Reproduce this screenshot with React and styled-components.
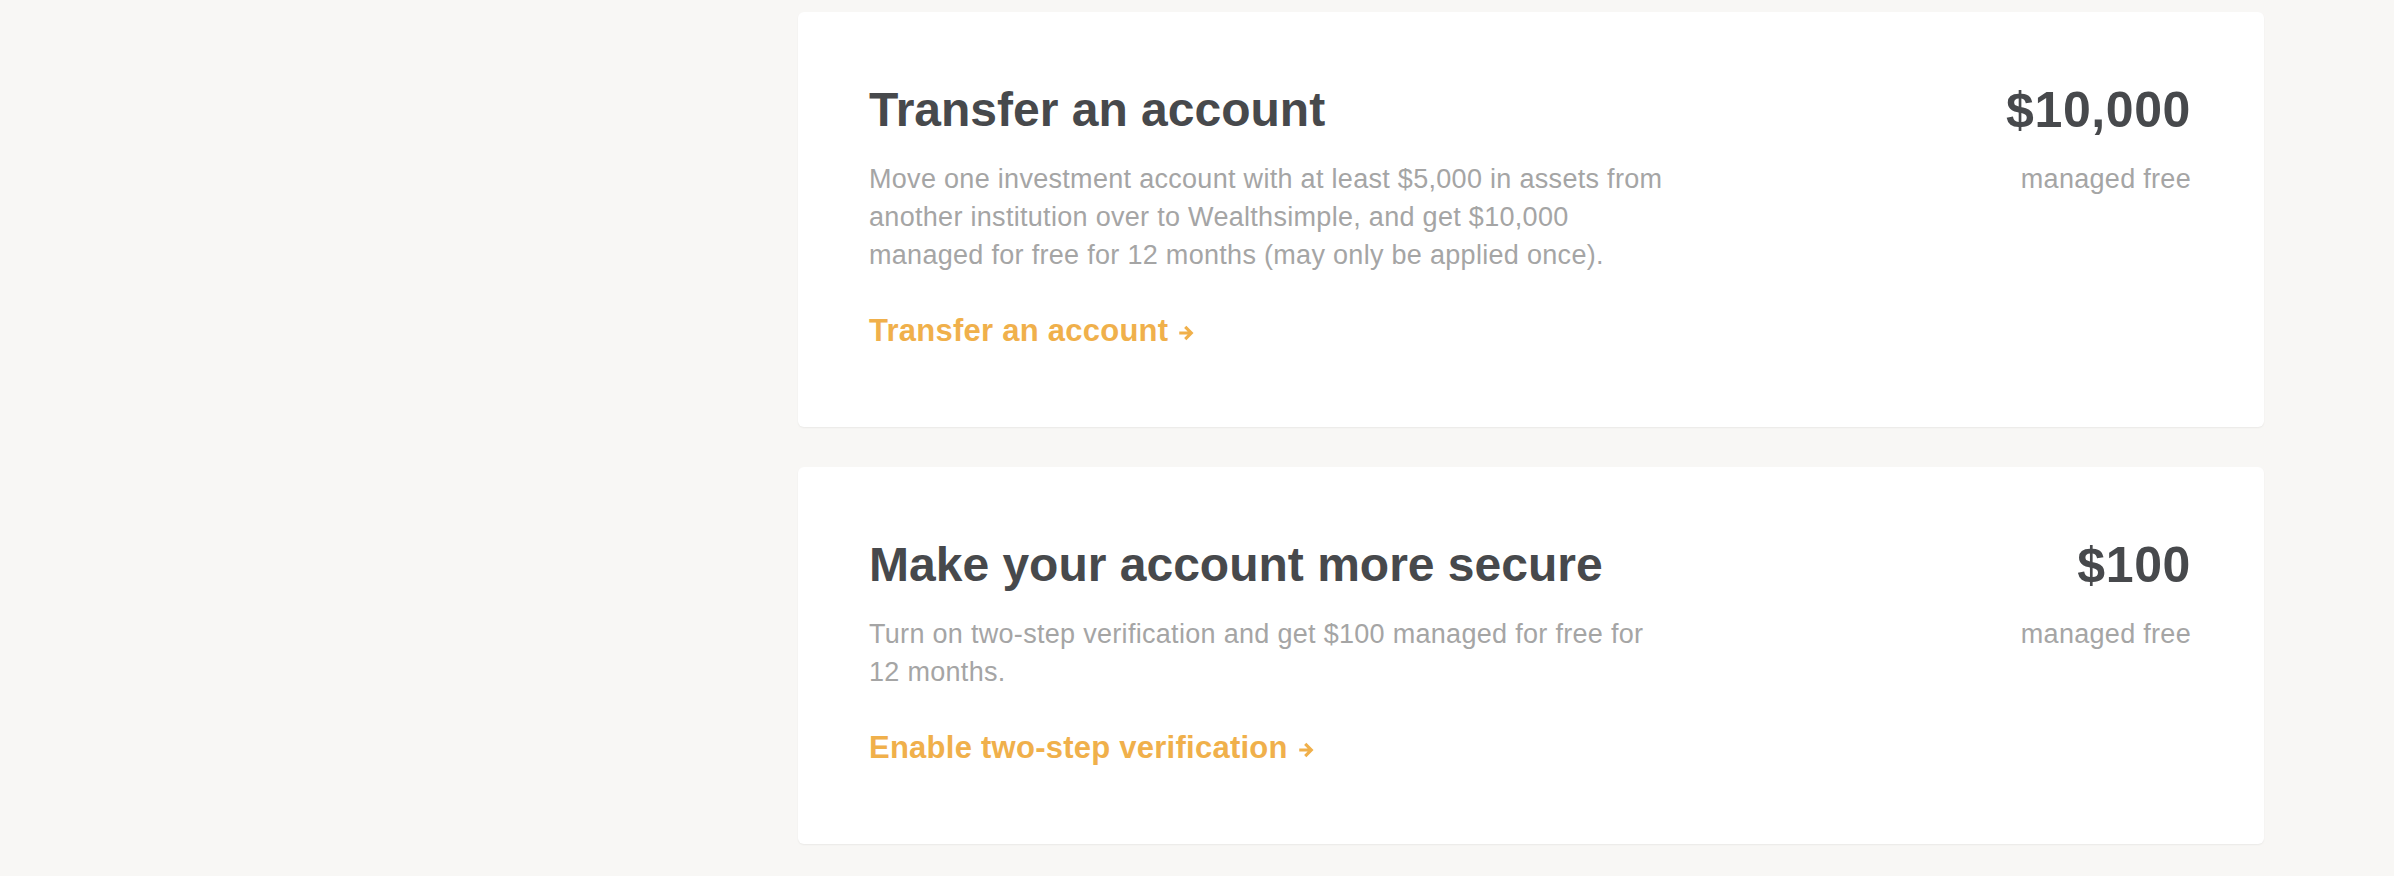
import React from 'react'
import styled, { createGlobalStyle } from 'styled-components'

const offers = [
  {
    title: 'Transfer an account',
    text: 'Move one investment account with at least $5,000 in assets from another institution over to Wealthsimple, and get $10,000 managed for free for 12 months (may only be applied once).',
    action: 'Transfer an account',
    amount: '$10,000',
  },
  {
    title: 'Make your account more secure',
    text: 'Turn on two-step verification and get $100 managed for free for 12 months.',
    action: 'Enable two-step verification',
    amount: '$100',
  },
]

export default function App() {
  return (
    <>
      <GlobalStyle />
      <Page>
        <Sidebar />
        <OfferList>
          {offers.map((offer) => (
            <OfferCard key={offer.title}>
              <OfferBody>
                <OfferTitle>{offer.title}</OfferTitle>
                <OfferText>{offer.text}</OfferText>
                <OfferLink href="#">
                  {offer.action}
                  <Arrow viewBox="0 0 14 16" aria-hidden="true">
                    <path d="M1 8h10.5M6.3 2.6L11.7 8l-5.4 5.4" />
                  </Arrow>
                </OfferLink>
              </OfferBody>
              <OfferValue>
                <Amount>{offer.amount}</Amount>
                <AmountNote>managed free</AmountNote>
              </OfferValue>
            </OfferCard>
          ))}
        </OfferList>
      </Page>
    </>
  )
}

const GlobalStyle = createGlobalStyle`
  html, body {
    margin: 0;
    background: #f8f7f5;
    font-family: "Liberation Sans", Arial, sans-serif;
  }
`

const Page = styled.div`
  display: grid;
  grid-template-columns: 798px 1466px;
  padding-top: 12px;
  min-height: 876px;
  box-sizing: border-box;
`

const Sidebar = styled.aside``

const OfferList = styled.div`
  display: flex;
  flex-direction: column;
  gap: 40px;
`

const OfferCard = styled.section`
  display: flex;
  justify-content: space-between;
  background: #fff;
  border-radius: 6px;
  box-shadow: 0 1px 2px rgba(0, 0, 0, 0.06);
  padding: 70px 73px 77px 71px;
`

const OfferBody = styled.div`
  display: flex;
  flex-direction: column;
  align-items: flex-start;
  width: 810px;
`

const OfferTitle = styled.h2`
  margin: 0;
  font-size: 48px;
  line-height: 56px;
  font-weight: 700;
  color: #47494c;
`

const OfferText = styled.p`
  margin: 21.5px 0 0;
  font-size: 27px;
  line-height: 38.4px;
  letter-spacing: 0.3px;
  color: #a5a5a5;
`

const OfferLink = styled.a`
  display: inline-flex;
  align-items: center;
  gap: 10px;
  margin-top: 37.5px;
  font-size: 31px;
  line-height: 38px;
  font-weight: 700;
  letter-spacing: 0.25px;
  color: #f0b04b;
  text-decoration: none;
`

const Arrow = styled.svg`
  flex: none;
  width: 16px;
  height: 18px;
  margin-top: 4px;
  fill: none;
  stroke: currentColor;
  stroke-width: 2.8;
`

const OfferValue = styled.div`
  display: flex;
  flex-direction: column;
  align-items: flex-end;
`

const Amount = styled.div`
  font-size: 50px;
  line-height: 56px;
  font-weight: 700;
  letter-spacing: 0.6px;
  color: #47494c;
`

const AmountNote = styled.div`
  margin-top: 21.5px;
  font-size: 27px;
  line-height: 38.4px;
  letter-spacing: 0.3px;
  color: #a5a5a5;
`
